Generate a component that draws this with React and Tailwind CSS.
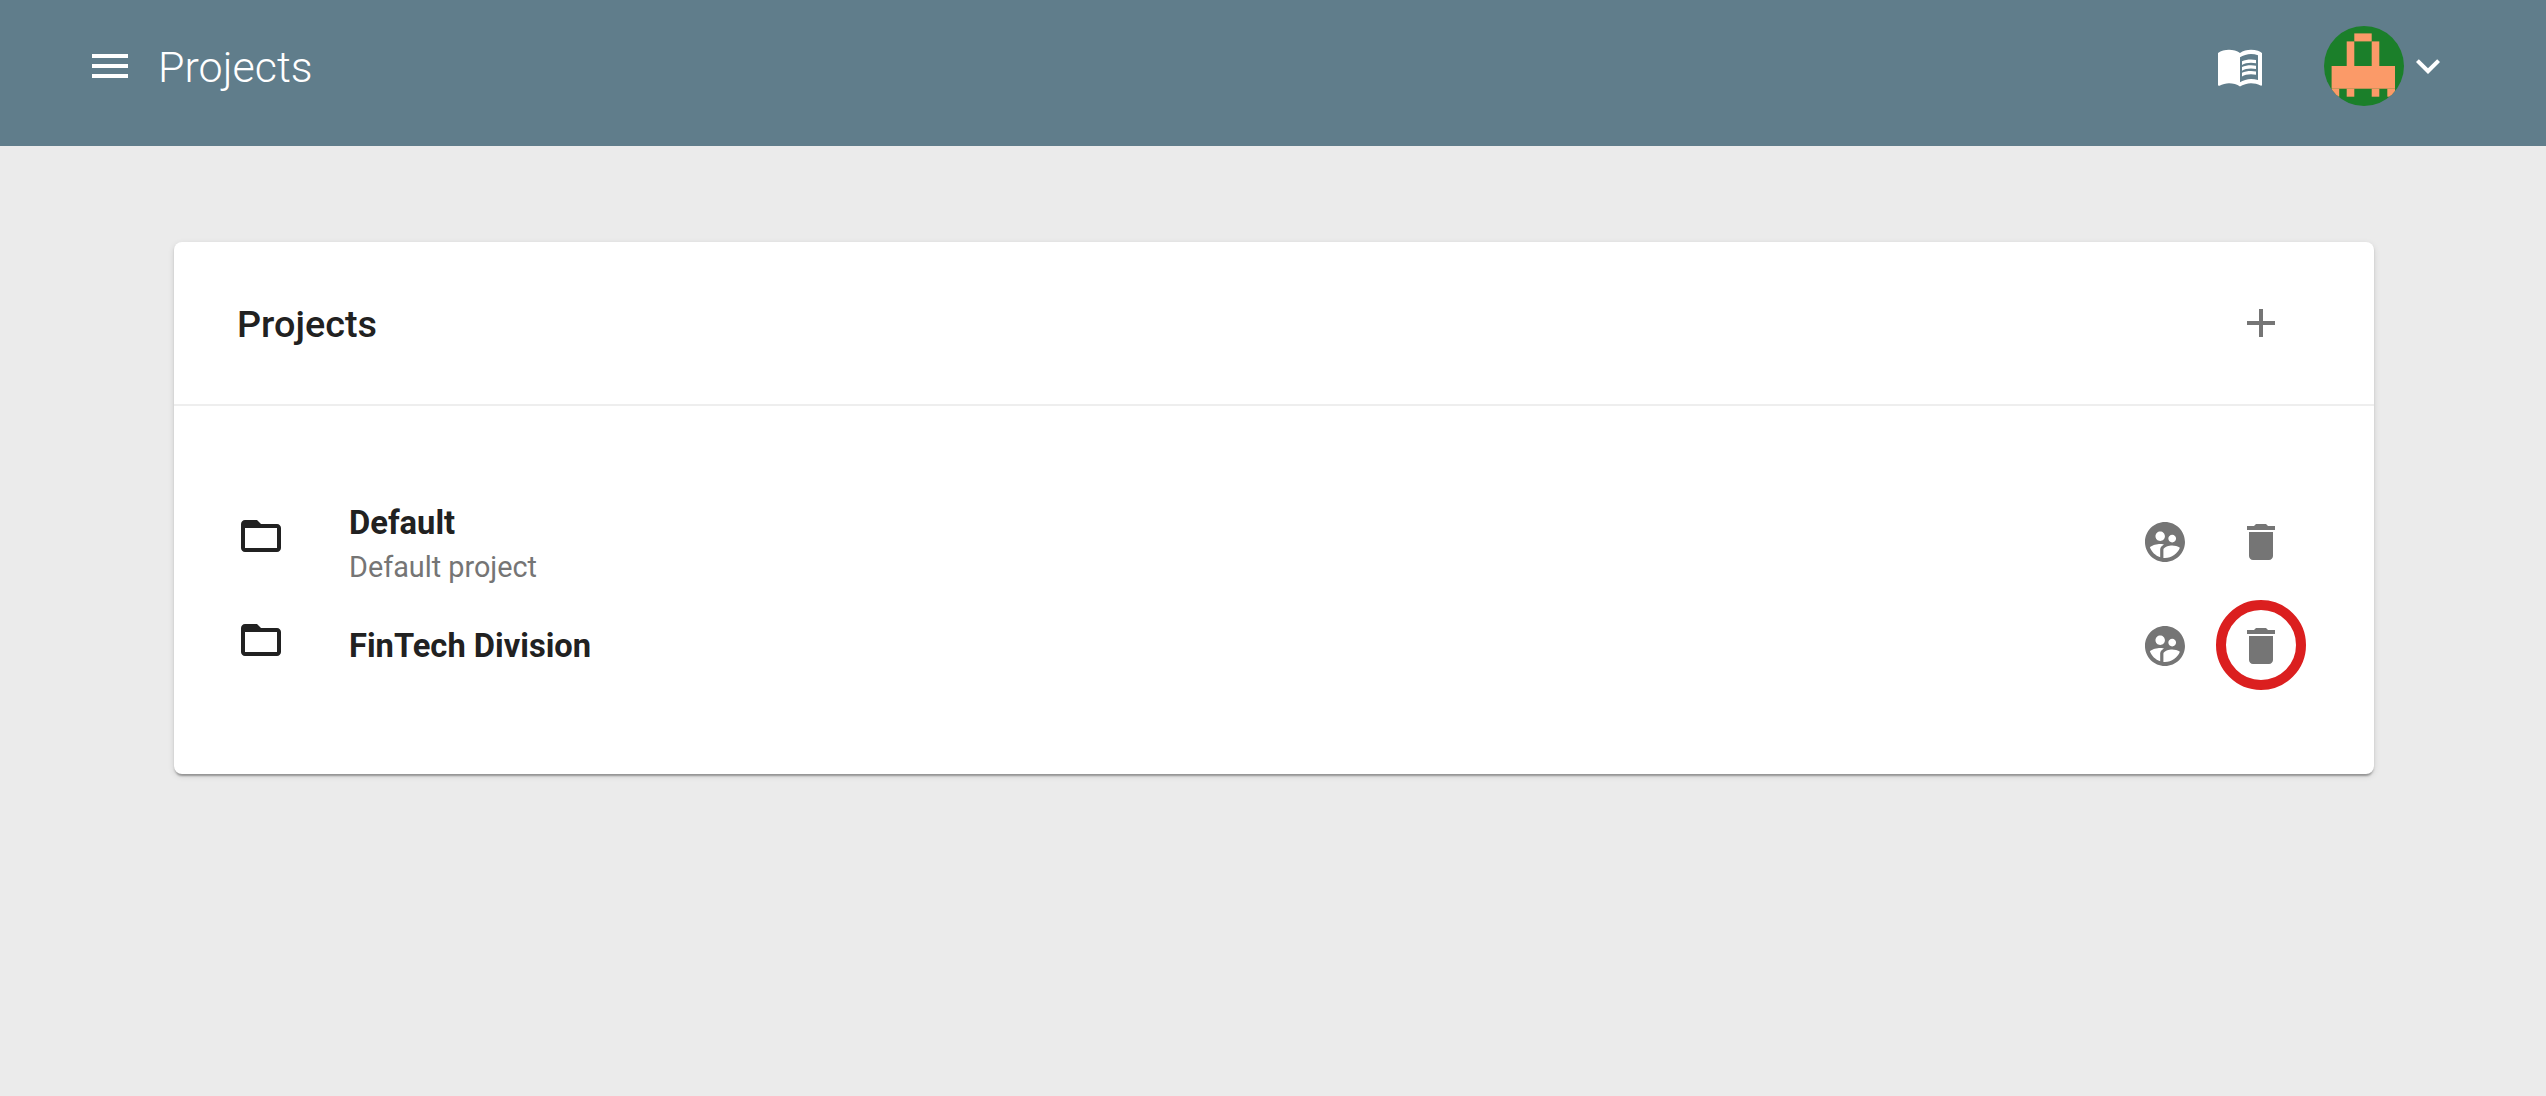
const Icon = ({ d, className = "w-12 h-12", par }) => (
  <svg viewBox="0 0 24 24" preserveAspectRatio={par} className={`block shrink-0 fill-current ${className}`}>
    <path d={d} />
  </svg>
);

const MENU = "M3 18h18v-2H3v2zm0-5h18v-2H3v2zm0-7v2h18V6H3z";
const BOOK = "M21 5c-1.11-.35-2.33-.5-3.5-.5-1.95 0-4.05.4-5.5 1.5-1.45-1.1-3.55-1.5-5.5-1.5S2.45 4.9 1 6v14.65c0 .25.25.5.5.5.1 0 .15-.05.25-.05C3.1 20.45 5.05 20 6.5 20c1.95 0 4.05.4 5.5 1.5 1.35-.85 3.8-1.5 5.5-1.5 1.65 0 3.35.3 4.75 1.05.1.05.15.05.25.05.25 0 .5-.25.5-.5V6c-.6-.45-1.25-.75-2-1zm0 13.5c-1.1-.35-2.3-.5-3.5-.5-1.7 0-4.15.65-5.5 1.5V8c1.35-.85 3.8-1.5 5.5-1.5 1.2 0 2.4.15 3.5.5v11.5zM17.5 10.5c.88 0 1.73.09 2.5.26V9.24c-.79-.15-1.64-.24-2.5-.24-1.7 0-3.24.29-4.5.83v1.66c1.13-.64 2.7-.99 4.5-.99zM13 12.49v1.66c1.13-.64 2.7-.99 4.5-.99.88 0 1.73.09 2.5.26V11.9c-.79-.15-1.64-.24-2.5-.24-1.7 0-3.24.3-4.5.83zM17.5 14.33c-1.7 0-3.24.29-4.5.83v1.66c1.13-.64 2.7-.99 4.5-.99.88 0 1.73.09 2.5.26v-1.52c-.79-.16-1.64-.24-2.5-.24z";
const CHEVRON = "M16.59 8.59L12 13.17 7.41 8.59 6 10l6 6 6-6z";
const ADD = "M19 13h-6v6h-2v-6H5v-2h6V5h2v6h6v2z";
const FOLDER = "M20 6h-8l-2-2H4c-1.1 0-1.99.9-1.99 2L2 18c0 1.1.9 2 2 2h16c1.1 0 2-.9 2-2V8c0-1.1-.9-2-2-2zm0 12H4V8h16v10z";
const USERS = "M11.99 2c-5.52 0-10 4.48-10 10s4.48 10 10 10 10-4.48 10-10-4.48-10-10-10zm3.61 6.34c1.07 0 1.93.86 1.93 1.93 0 1.07-.86 1.93-1.93 1.93-1.07 0-1.93-.86-1.93-1.93-.01-1.07.86-1.93 1.93-1.93zm-6-1.58c1.3 0 2.36 1.06 2.36 2.36 0 1.3-1.06 2.36-2.36 2.36s-2.36-1.06-2.36-2.36c0-1.31 1.05-2.36 2.36-2.36zm0 9.13v3.75c-2.4-.75-4.3-2.6-5.14-4.96 1.05-1.12 3.67-1.69 5.14-1.69.53 0 1.2.08 1.9.22-1.64.87-1.9 2.02-1.9 2.68zM11.99 20c-.27 0-.53-.01-.79-.04v-4.07c0-1.42 2.94-2.13 4.4-2.13 1.07 0 2.92.39 3.84 1.15-1.17 2.97-4.06 5.09-7.45 5.09z";
const TRASH = "M6 19c0 1.1.9 2 2 2h8c1.1 0 2-.9 2-2V7H6v12zM19 4h-3.5l-1-1h-5l-1 1H5v2h14V4z";

const Avatar = () => (
  <svg viewBox="0 0 80 80" className="block w-20 h-20 shrink-0">
    <defs>
      <clipPath id="avatar-clip">
        <circle cx="40" cy="40" r="40" />
      </clipPath>
    </defs>
    <g clipPath="url(#avatar-clip)">
      <rect width="80" height="80" fill="#1b7f2a" />
      <g fill="#fb9a68">
        <rect x="30.3" y="7.4" width="17.4" height="8" />
        <rect x="22.7" y="15.4" width="7.6" height="25" />
        <rect x="47.7" y="15.4" width="7.6" height="25" />
        <rect x="7.6" y="40" width="63.4" height="22.7" />
        <rect x="7.6" y="62.7" width="7.6" height="8" />
        <rect x="22.7" y="62.7" width="7.6" height="8" />
        <rect x="47.7" y="62.7" width="7.6" height="8" />
        <rect x="63.3" y="62.7" width="7.7" height="8" />
      </g>
    </g>
  </svg>
);

const Row = ({ name, description, ring }) => (
  <div className="flex items-center h-[104px] pl-[63px] pr-[89px]">
    <Icon d={FOLDER} className="w-12 h-12 self-start mt-[22px] text-[#212121]" />
    <div className={`flex-1 ml-[64px] ${description ? "mt-[3px]" : ""}`}>
      <div className="text-[32.7px] leading-[40px] font-bold text-[#212121]">{name}</div>
      {description && (
        <div className="mt-[6px] text-[28.8px] leading-[36px] text-[#757575]">{description}</div>
      )}
    </div>
    <div className="flex items-center gap-12 text-[#757575]">
      <Icon d={USERS} />
      <div className="relative">
        <Icon d={TRASH} />
        {ring && (
          <div className="absolute left-[-21px] top-[-22px] w-[90px] h-[90px] rounded-full border-[10px] border-[#db1f1f]" />
        )}
      </div>
    </div>
  </div>
);

export default function App() {
  return (
    <div className="min-h-screen bg-[#ebebeb] font-['Roboto',sans-serif]">
      <header className="h-[146px] pb-[14px] pl-[86px] pr-[94px] flex items-center justify-between bg-[#607d8b] text-white">
        <div className="flex items-center gap-6">
          <Icon d={MENU} />
          <h1 className="mt-[2px] text-[43px] leading-[48px] font-light">Projects</h1>
        </div>
        <div className="flex items-center">
          <Icon d={BOOK} par="none" className="w-12 h-[52px] mr-[60px]" />
          <Avatar />
          <Icon d={CHEVRON} />
        </div>
      </header>
      <main className="pl-[174px] pr-[172px] pt-[96px]">
        <section className="h-[532px] rounded-lg bg-white shadow-[0_4px_2px_-2px_rgba(0,0,0,0.2),0_2px_2px_0_rgba(0,0,0,0.14),0_2px_6px_0_rgba(0,0,0,0.12)]">
          <div className="h-[164px] pl-[63px] pr-[89px] flex items-center justify-between border-b-2 border-[#eeeeee]">
            <h2 className="mt-[2px] text-[37.8px] leading-[44px] font-medium text-[#212121]">Projects</h2>
            <Icon d={ADD} className="w-12 h-12 text-[#757575]" />
          </div>
          <div className="pt-[84px]">
            <Row name="Default" description="Default project" />
            <Row name="FinTech Division" ring />
          </div>
        </section>
      </main>
    </div>
  );
}
